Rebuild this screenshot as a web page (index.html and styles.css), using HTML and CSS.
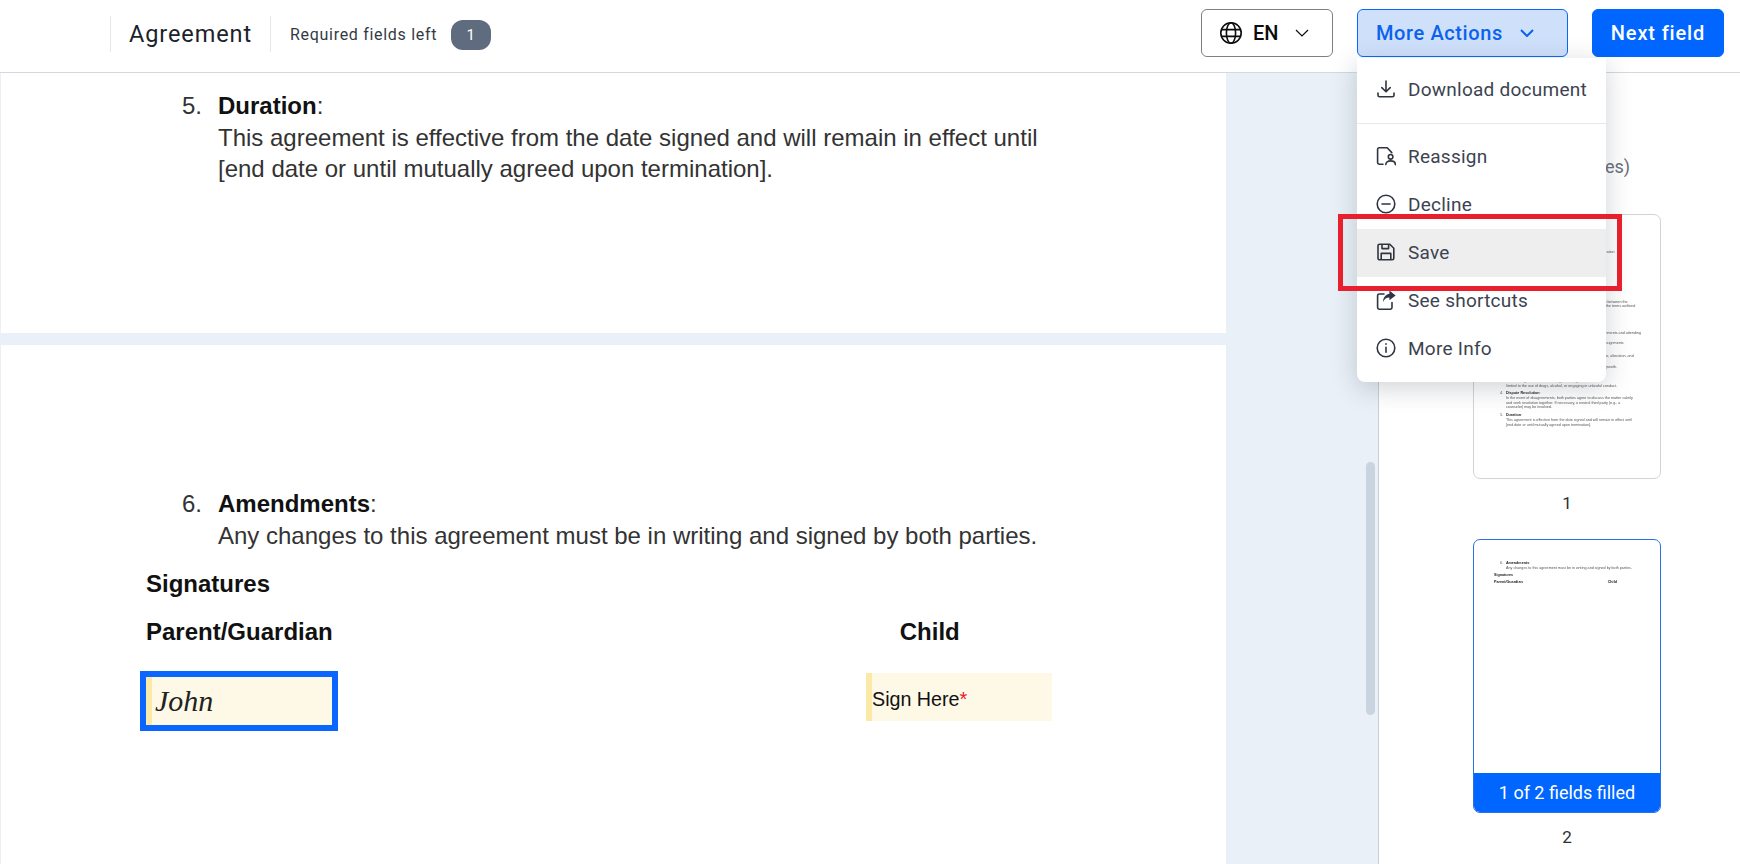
FILE: index.html
```html
<!DOCTYPE html>
<html lang="en">
<head>
  <meta charset="UTF-8" />
  <meta name="viewport" content="width=device-width, initial-scale=1.0" />
  <title>Agreement</title>
  <link rel="stylesheet" href="styles.css">
</head>

<body>
  <!-- Top bar -->
  <header class="topbar">
    <h1 class="doc-title">Agreement</h1>
    <div class="required">
      <span>Required fields left</span>
      <span class="required-count">1</span>
    </div>

    <div class="topbar-actions">
      <button class="btn btn-lang">
        <svg class="icon-globe" viewBox="0 0 24 24" fill="none" stroke="currentColor" stroke-width="1.6">
          <circle cx="12" cy="12" r="10.2" />
          <ellipse cx="12" cy="12" rx="4.6" ry="10.2" />
          <path d="M2.4 8.6h19.2M2.4 15.4h19.2" />
        </svg>
        <span>EN</span>
        <svg class="icon-chevron" viewBox="0 0 14 8" fill="none" stroke="currentColor" stroke-width="1.2">
          <path d="M1 1l6 6 6-6" />
        </svg>
      </button>

      <button class="btn btn-more">
        <span>More Actions</span>
        <svg class="icon-chevron" viewBox="0 0 14 8" fill="none" stroke="currentColor" stroke-width="2">
          <path d="M1 1l6 6 6-6" />
        </svg>
      </button>

      <button class="btn btn-next">Next field</button>
    </div>
  </header>

  <div class="workspace">
    <!-- Document -->
    <main class="viewer">
      <section class="page page-first">
        <div class="clause">
          <span class="clause-num">5.</span>
          <div class="clause-body">
            <p><strong>Duration</strong>:</p>
            <p>This agreement is effective from the date signed and will remain in effect until<br>[end date or until mutually agreed upon termination].</p>
          </div>
        </div>
      </section>

      <section class="page page-second">
        <div class="clause">
          <span class="clause-num">6.</span>
          <div class="clause-body">
            <p><strong>Amendments</strong>:</p>
            <p>Any changes to this agreement must be in writing and signed by both parties.</p>
          </div>
        </div>

        <h2 class="sig-title">Signatures</h2>
        <div class="sig-names">
          <strong>Parent/Guardian</strong>
          <strong>Child</strong>
        </div>

        <div class="sig-fields">
          <div class="field field-active">
            <div class="field-inner"><span class="signature">John</span></div>
          </div>
          <div class="field field-empty">
            <div class="field-inner">Sign Here<span class="req-star">*</span></div>
          </div>
        </div>
      </section>

      <div class="scrollbar"></div>
    </main>

    <!-- Page thumbnails -->
    <aside class="sidebar">
      <p class="sidebar-note">Pages (2 pages)</p>

      <div class="thumb thumb-first">
        <p class="thumb-title">Declaration</p>
        <p class="thumb-a">entered into between the</p>
        <p class="thumb-a2">accept the terms outlined</p>
        <p class="thumb-b">completing assignments and attending</p>
        <p class="thumb-c">all of the assignments</p>
        <p class="thumb-d">any damage, alteration, and</p>
        <p class="thumb-e">n</p>
        <p class="thumb-e2">academic growth.</p>
        <p class="thumb-f">The child agrees to behave safely, including but not</p>
        <p>limited to the use of drugs, alcohol, or engaging in unlawful conduct.</p>
        <p class="thumb-g"><span>4.</span><strong>Dispute Resolution</strong>:</p>
        <p>In the event of disagreements, both parties agree to discuss the matter calmly</p>
        <p>and seek resolution together. If necessary, a neutral third party (e.g., a</p>
        <p>counselor) may be involved.</p>
        <p class="thumb-g"><span>5.</span><strong>Duration</strong>:</p>
        <p>This agreement is effective from the date signed and will remain in effect until</p>
        <p>[end date or until mutually agreed upon termination].</p>
      </div>
      <div class="thumb-num">1</div>

      <div class="thumb thumb-active">
        <div class="thumb-doc">
          <p class="thumb-g"><span>6.</span><strong>Amendments</strong>:</p>
          <p>Any changes to this agreement must be in writing and signed by both parties.</p>
          <p class="thumb-sig"><strong>Signatures</strong></p>
          <p class="thumb-sig thumb-names"><strong>Parent/Guardian</strong><strong>Child</strong></p>
        </div>
        <div class="thumb-status">1 of 2 fields filled</div>
      </div>
      <div class="thumb-num">2</div>
    </aside>
  </div>

  <!-- More Actions menu -->
  <div class="menu">
    <div class="menu-item">
      <svg viewBox="0 0 20 20" fill="none" stroke="currentColor" stroke-width="1.6" stroke-linecap="round" stroke-linejoin="round">
        <path d="M10 2v10.5M5.8 8.6L10 12.8l4.2-4.2M2 14v2.2c0 .9.7 1.6 1.6 1.6h12.8c.9 0 1.6-.7 1.6-1.6V14" />
      </svg>
      <span>Download document</span>
    </div>
    <div class="menu-divider"></div>
    <div class="menu-item">
      <svg viewBox="0 0 20 20" fill="none" stroke="currentColor" stroke-width="1.6" stroke-linecap="round" stroke-linejoin="round">
        <path d="M7 18.2H3.2c-1 0-1.600-.7-1.600-1.600V3.400c0-.9.6-1.600 1.600-1.600h8l4.600 4.800" />
        <circle cx="14.6" cy="10.8" r="2.3" />
        <path d="M9.800 18.600c0-2.400 2-3.700 4.800-3.700s4.800 1.300 4.800 3.700" />
      </svg>
      <span>Reassign</span>
    </div>
    <div class="menu-item">
      <svg viewBox="0 0 20 20" fill="none" stroke="currentColor" stroke-width="1.6" stroke-linecap="round">
        <circle cx="10" cy="10" r="8.8" />
        <path d="M6 10h8" />
      </svg>
      <span>Decline</span>
    </div>
    <div class="menu-item menu-item-hover">
      <svg viewBox="0 0 20 20" fill="none" stroke="currentColor" stroke-width="1.6" stroke-linejoin="round">
        <path d="M3.600 2.200h10.200l4 4v10c0 .9-.7 1.600-1.600 1.600H3.600c-.9 0-1.600-.7-1.600-1.600V3.800c0-.9.7-1.600 1.600-1.600z" />
        <path d="M6 2.400v4.200h6.600V2.400M5.200 17.600v-6.200h9.600v6.200" />
      </svg>
      <span>Save</span>
    </div>
    <div class="menu-item">
      <svg viewBox="0 0 20 20" fill="none" stroke="currentColor" stroke-width="1.6" stroke-linecap="round" stroke-linejoin="round">
        <path d="M8 4H3.200c-.9 0-1.600.7-1.600 1.600v12c0 .9.7 1.600 1.600 1.600h11.200c.9 0 1.600-.7 1.600-1.600v-5" />
        <path class="icon-fill" d="M13.400.6l6.200 4.800-6.200 4.800V7.500c-3 0-5 1.400-6.400 4.500.2-4.700 2.600-7.600 6.400-8.300z" />
      </svg>
      <span>See shortcuts</span>
    </div>
    <div class="menu-item">
      <svg viewBox="0 0 20 20" fill="none" stroke="currentColor" stroke-width="1.6" stroke-linecap="round">
        <circle cx="10" cy="10" r="8.8" />
        <path d="M10 9.200v5M10 5.800v.4" />
      </svg>
      <span>More Info</span>
    </div>
  </div>

  <!-- Red call-out around Save -->
  <div class="callout"></div>
</body>
</html>
```

FILE: styles.css
```css
* {
  box-sizing: border-box;
}

html,
body {
  height: 100%;
}

body {
  margin: 0;
  overflow: hidden;
  background-color: #fff;
  font-family: Roboto, sans-serif;
  color: #1f2630;
  display: flex;
  flex-direction: column;
}

p {
  margin: 0;
}

/* Top bar */
.topbar {
  height: 73px;
  flex-shrink: 0;
  display: flex;
  align-items: center;
  padding: 0 16px 5px 110px;
  border-bottom: 1px solid #d3d9e0;
}

.doc-title {
  margin: 0;
  height: 36px;
  padding: 0 18px;
  display: flex;
  align-items: center;
  border-left: 1px solid #e3e6ea;
  border-right: 1px solid #e3e6ea;
  font-size: 23.5px;
  font-weight: 400;
  letter-spacing: 0.9px;
  color: #1c222b;
}

.required {
  display: flex;
  align-items: center;
  gap: 14px;
  margin: 2px 0 0 19px;
  font-size: 16px;
  letter-spacing: 0.7px;
  color: #333a45;
}

.required-count {
  width: 40px;
  height: 30px;
  border-radius: 12px;
  background-color: #5f6b7e;
  color: #fff;
  display: flex;
  align-items: center;
  justify-content: center;
  font-size: 15px;
}

.topbar-actions {
  margin-left: auto;
  align-self: flex-start;
  display: flex;
  gap: 24px;
  margin-top: 9px;
}

.btn {
  height: 48px;
  border-radius: 6px;
  font-family: Roboto, sans-serif;
  font-size: 20px;
  font-weight: 500;
  display: flex;
  align-items: center;
  justify-content: center;
  cursor: pointer;
}

.btn-lang {
  width: 132px;
  gap: 10px;
  justify-content: flex-start;
  padding-left: 17px;
  background-color: #fff;
  border: 1px solid #7f7f7f;
  color: #0c0c0c;
}

.btn-lang .icon-chevron {
  margin-left: 6px;
}

.icon-globe {
  width: 24px;
  height: 24px;
}

.icon-chevron {
  width: 14px;
  height: 8px;
}

.btn-more {
  width: 211px;
  gap: 17px;
  justify-content: flex-start;
  padding-left: 18px;
  background-color: #cfe0fb;
  border: 1px solid #0a66ff;
  color: #0a62ee;
  letter-spacing: 0.6px;
}

.btn-next {
  width: 132px;
  background-color: #0066ff;
  border: 1px solid #0066ff;
  color: #fff;
  letter-spacing: 0.85px;
}

/* Document area */
.workspace {
  flex: 1;
  min-height: 0;
  display: flex;
}

.viewer {
  position: relative;
  width: 1379px;
  flex-shrink: 0;
  overflow: hidden;
  background-color: #e9f0f7;
  border-right: 1px solid #c9cfd6;
}

.page {
  width: 1225px;
  margin-left: 1px;
  background-color: #fff;
  font-family: "Liberation Sans", sans-serif;
  font-size: 24px;
  line-height: 31.5px;
  color: #333;
}

.page-first {
  height: 260px;
  padding-top: 17px;
}

.page-second {
  height: 520px;
  margin-top: 12px;
  padding-top: 143px;
}

.page strong {
  color: #111;
}

.clause {
  display: flex;
  padding-left: 181px;
}

.clause-num {
  width: 36px;
}

.sig-title {
  margin: 17px 0 0 145px;
  font-size: 24px;
  line-height: 31.5px;
  color: #111;
}

.sig-names {
  display: flex;
  margin: 16px 0 0 145px;
}

.sig-names strong:last-child {
  margin-left: 567px;
}

.sig-fields {
  display: flex;
  align-items: flex-start;
  margin: 24px 0 0 139px;
}

.field {
  height: 48px;
  background-color: #fef8e6;
}

.field-inner {
  height: 100%;
  display: flex;
  align-items: center;
  border-left: 6px solid #fbe9a8;
  font-size: 19.7px;
  color: #111;
}

.field-active {
  width: 198px;
  height: 60px;
  border: 6px solid #0a66ff;
}

.field-empty {
  width: 186px;
  margin: 2px 0 0 528px;
}

.field-empty .field-inner {
  padding-top: 5px;
}

.signature {
  margin-left: 3px;
  font-family: "Liberation Serif", serif;
  font-size: 30px;
  font-style: italic;
  color: #222;
}

.req-star {
  align-self: flex-start;
  margin-top: 6px;
  font-size: 20px;
  color: #e8202e;
}

.scrollbar {
  position: absolute;
  top: 389px;
  left: 1366px;
  width: 9px;
  height: 253px;
  border-radius: 5px;
  background-color: #c9d4e0;
}

/* Thumbnails */
.sidebar {
  flex: 1;
  display: flex;
  flex-direction: column;
  align-items: flex-start;
  padding: 83px 0 0 94px;
  background-color: #fff;
}

.sidebar-note {
  width: 157px;
  height: 21px;
  margin-bottom: 37px;
  flex-shrink: 0;
  text-align: right;
  font-size: 18px;
  line-height: 21px;
  color: #68707c;
  white-space: nowrap;
}

.thumb {
  width: 188px;
  flex-shrink: 0;
  border: 1px solid #cfd4da;
  border-radius: 7px;
  background-color: #fff;
  overflow: hidden;
  font-family: "Liberation Sans", sans-serif;
  font-size: 3.7px;
  line-height: 4.7px;
  color: #555;
  white-space: nowrap;
}

.thumb p {
  filter: blur(0.25px);
}

.thumb-first {
  height: 265px;
  padding: 35px 0 0 32px;
}

/* only the line ends show past the open menu */
.thumb-title {
  margin-left: 90px;
}

.thumb-a {
  margin: 45px 0 0 81px;
}

.thumb-a2 {
  margin-left: 88px;
}

.thumb-b {
  margin: 22px 0 0 72px;
}

.thumb-c {
  margin: 5px 0 0 82px;
}

.thumb-d {
  margin: 8px 0 0 82px;
}

.thumb-e {
  margin: 3px 0 0 96px;
  height: 4px;
  line-height: 4px;
}

.thumb-e2 {
  margin-left: 82px;
}

.thumb-f {
  margin-top: 9px;
}

.thumb-g {
  margin-top: 3px;
  margin-left: -6px;
}

.thumb-g span {
  margin-right: 2.8px;
}

.thumb strong {
  color: #222;
}

.thumb-num {
  width: 188px;
  height: 60px;
  flex-shrink: 0;
  padding-top: 14px;
  text-align: center;
  font-size: 17px;
  line-height: 21px;
  color: #2b2f36;
}

.thumb-active {
  height: 274px;
  border-color: #2a72e6;
  display: flex;
  flex-direction: column;
}

.thumb-doc {
  flex: 1;
  padding: 18px 0 0 32px;
}

.thumb-sig {
  margin: 2.5px 0 0 -12px;
}

.thumb-names {
  display: flex;
  gap: 85px;
  margin-top: 2.5px;
}

.thumb-status {
  height: 40px;
  margin: 0 -1px -1px;
  background-color: #0066ff;
  color: #fff;
  font-family: Roboto, sans-serif;
  font-size: 18px;
  line-height: 40px;
  text-align: center;
}

/* More Actions dropdown */
.menu {
  position: absolute;
  top: 58px;
  left: 1357px;
  width: 249px;
  padding: 8px 0 9px;
  background-color: #fff;
  border-radius: 0 0 8px 8px;
  box-shadow: 0 6px 26px rgba(40, 50, 70, 0.22);
}

.menu-item {
  height: 48px;
  display: flex;
  align-items: center;
  gap: 12px;
  padding: 0 0 2px 19px;
  font-size: 19px;
  letter-spacing: 0.25px;
  color: #3c4350;
  white-space: nowrap;
}

.menu-item svg {
  width: 20px;
  height: 20px;
  flex-shrink: 0;
  color: #2f3540;
}

.icon-fill {
  fill: currentColor;
  stroke: none;
}

.menu-item-hover {
  background-color: #eeeeee;
}

.menu-divider {
  height: 1px;
  margin: 9px 0 9px;
  background-color: #e6e8eb;
}

.callout {
  position: absolute;
  top: 214px;
  left: 1338px;
  width: 284px;
  height: 77px;
  border: 5px solid #e8202e;
}
```
